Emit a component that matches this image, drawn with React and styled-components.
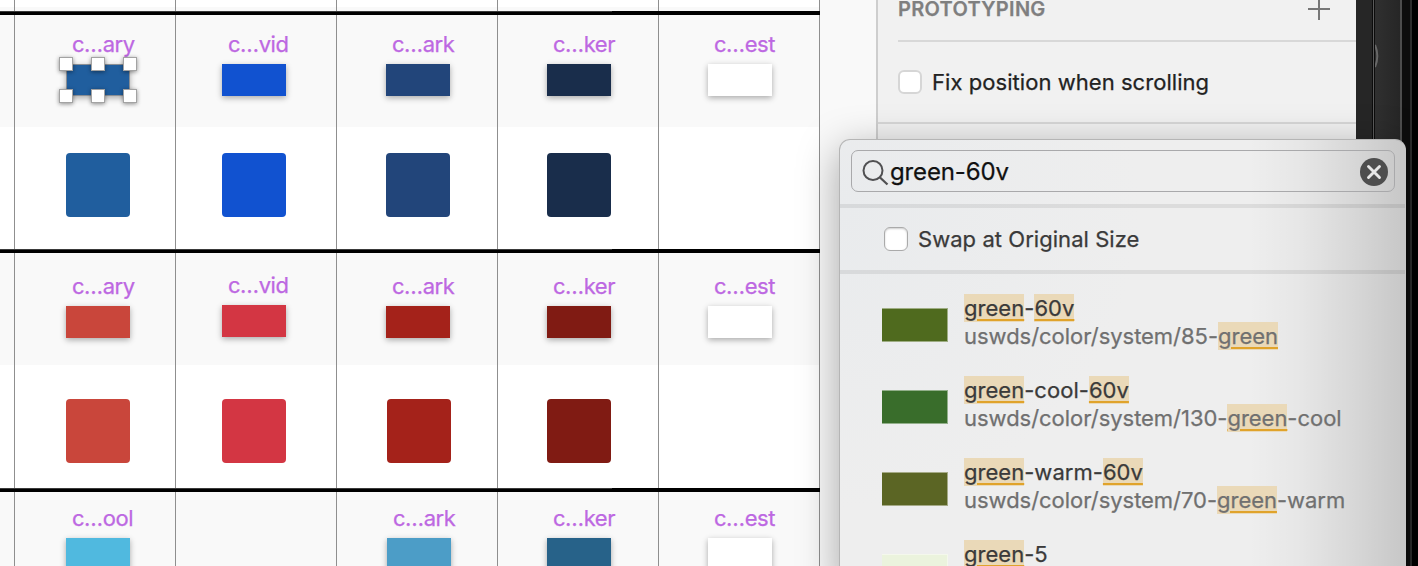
import React from "react";
import styled, { createGlobalStyle } from "styled-components";

const GlobalStyle = createGlobalStyle`
  * { box-sizing: border-box; }
  body { margin: 0; overflow: hidden; }
`;

const Screen = styled.div`
  position: relative;
  display: flex;
  width: 1418px;
  height: 566px;
  overflow: hidden;
  background: #f9f9f9;
  font-family: Inter, "Liberation Sans", sans-serif;
  font-size: 22px;
  font-weight: 400;
  -webkit-text-stroke: 0.25px;
  line-height: 28px;
  white-space: nowrap;
`;

const Board = styled.div`
  flex: none;
  width: 820px;
  background: #fff;
`;

const BoardTop = styled.div`
  display: flex;
  height: 11px;
  background: linear-gradient(#fff 7px, #f9f9f9 7px);
`;

const Rule = styled.div`
  height: 4px;
  background: #000;
  &::before {
    content: "";
    display: block;
    width: 612px;
    height: 5px;
    background: linear-gradient(#3a3a3a 1px, #000 1px 4px, #b8b8b8 4px);
  }
`;

const BoardRow = styled.div`
  display: flex;
  height: ${(p) => p.$height}px;
  background: linear-gradient(#f9f9f9 112px, #fff 112px);
`;

const Gutter = styled.div`
  flex: none;
  width: 15px;
  border-right: 1px solid #8f8f8f;
`;

const Cell = styled.div`
  flex: none;
  display: flex;
  flex-direction: column;
  width: 161px;
  padding-left: ${(p) => p.$inset || 0}px;
  padding-top: ${(p) => p.$top || 0}px;
  border-right: 1px solid #8f8f8f;
`;

const StyleName = styled.div`
  padding-left: 6px;
  height: 28px;
  margin-bottom: ${(p) => p.$gap}px;
  color: #bd68e2;
  letter-spacing: -0.45px;
`;

const Swatch = styled.div`
  flex: none;
  width: 64px;
  height: 32px;
  background: ${(p) => p.$color};
  box-shadow: 0 2px 6px rgba(0, 0, 0, 0.32);
  ${(p) => p.$selected && "border: 1px solid #8b8f94;"}
`;

const Handles = styled.div`
  display: grid;
  grid-template: repeat(2, 14px) / repeat(3, 14px);
  gap: 18px;
  margin: -8px;
`;

const Handle = styled.div`
  background: #fff;
  border: 1px solid #a3a3a3;
  box-shadow: 0 1px 4px rgba(0, 0, 0, 0.45);
`;

const Tile = styled.div`
  flex: none;
  width: 64px;
  height: 64px;
  margin-top: ${(p) => p.$gap}px;
  margin-left: ${(p) => p.$shift || 0}px;
  border-radius: 4px;
  background: ${(p) => p.$color};
`;

const CanvasGap = styled.div`
  flex: none;
  width: 56px;
`;

const Inspector = styled.div`
  flex: none;
  width: 480px;
  border-left: 2px solid #cecece;
  background: #f1f1f1;
`;

const SectionHead = styled.div`
  display: flex;
  align-items: flex-start;
  justify-content: space-between;
  height: 42px;
  margin-left: 20px;
  padding-right: 26px;
  border-bottom: 2px solid #d8d8d8;
`;

const SectionTitle = styled.div`
  margin-top: -5px;
  color: #7f7f7f;
  font-size: 20px;
  font-weight: 600;
  letter-spacing: 0.3px;
`;

const CheckRow = styled.label`
  display: flex;
  align-items: center;
  gap: 10px;
  height: ${(p) => p.$height}px;
  padding-left: ${(p) => p.$inset}px;
  border-bottom: ${(p) => p.$rule};
  color: ${(p) => p.$color};
  letter-spacing: 0.05px;
`;

const CheckBox = styled.span`
  flex: none;
  width: 24px;
  height: 24px;
  border-radius: 6px;
  background: #fff;
  border: ${(p) => (p.$soft ? "2px solid #d6d6d6" : "1px solid #aaa")};
  ${(p) => !p.$soft && "box-shadow: inset 0 1px 2px rgba(0,0,0,.2);"}
`;

const Behind = styled.div`
  flex: none;
  display: flex;
  width: 62px;
  background: #000;
`;

const Strip = styled.div`
  flex: none;
  width: ${(p) => p.$width}px;
  padding-top: ${(p) => p.$top || 0}px;
  overflow: hidden;
  background: ${(p) => p.$color};
`;

const Popover = styled.div`
  position: absolute;
  left: 839px;
  top: 139px;
  width: 567px;
  height: 450px;
  padding-top: 10px;
  border: 1px solid #b5b5b5;
  border-right-color: transparent;
  border-radius: 11px;
  background:
    linear-gradient(90deg, rgba(0, 0, 0, 0) 410px, rgba(0, 0, 0, 0.03) 460px, rgba(0, 0, 0, 0.09) 510px, rgba(0, 0, 0, 0.165) 566px) border-box,
    radial-gradient(circle at 0 70px, #e9ebed, #eeeeee 300px) border-box;
  box-shadow: 0 10px 40px rgba(0, 0, 0, 0.34);
`;

const SearchField = styled.div`
  display: flex;
  align-items: center;
  height: 42px;
  margin: 0 10px 0 11px;
  padding: 1px 6px 0 10px;
  border: 1px solid #a9a9ab;
  border-radius: 7px;
`;

const Query = styled.span`
  flex: 1;
  padding-top: 1px;
  color: #111;
  font-size: 24px;
  letter-spacing: -0.15px;
`;

const Divider = styled.div`
  height: 4px;
  margin-top: ${(p) => p.$gap || 0}px;
  background: rgba(0, 0, 0, 0.075);
`;

const Results = styled.div`
  display: flex;
  flex-direction: column;
  gap: 26px;
  padding: 20px 0 0 42px;
`;

const Result = styled.div`
  display: flex;
  align-items: center;
  gap: 16px;
  height: 56px;
`;

const ResultColor = styled.div`
  flex: none;
  width: 66px;
  height: 34px;
  margin-top: 6px;
  border: solid rgba(255, 255, 255, 0.45);
  border-width: 1px 1px 1px 0;
  background: ${(p) => p.$color};
`;

const ResultName = styled.div`
  color: #3a3a3a;
  letter-spacing: 0.03px;
`;

const ResultPath = styled.div`
  color: #707070;
  letter-spacing: -0.03px;
`;

const Match = styled.mark`
  display: inline-block;
  height: 28px;
  background: #ead9b8;
  color: inherit;
  text-decoration: underline 2px #e0a32b;
  text-underline-offset: 3px;
`;

const rows = [
  {
    height: 234,
    top: 15,
    tileGap: 57,
    cells: [
      { name: "c…ary", inset: 51, color: "#205e9e", tile: "#205e9e", selected: true },
      { name: "c…vid", inset: 46, color: "#1152d0", tile: "#1152d0" },
      { name: "c…ark", inset: 49, color: "#22457a", tile: "#22457a" },
      { name: "c…ker", inset: 49, color: "#192d4b", tile: "#192d4b" },
      { name: "c…est", inset: 49, color: "#fff" },
    ],
  },
  {
    height: 235,
    top: 19,
    tileGap: 61,
    cells: [
      { name: "c…ary", inset: 51, color: "#c9463b", tile: "#c9463b" },
      { name: "c…vid", inset: 46, color: "#d33643", tile: "#d33643", lift: 1 },
      { name: "c…ark", inset: 49, color: "#a4221a", tile: "#a4221a", shift: 1 },
      { name: "c…ker", inset: 49, color: "#801b13", tile: "#801b13" },
      { name: "c…est", inset: 49, color: "#fff" },
    ],
  },
  {
    height: 74,
    top: 12,
    cells: [
      { name: "c…ool", inset: 51, color: "#50b9df" },
      null,
      { name: "c…ark", inset: 50, color: "#4c9dc7" },
      { name: "c…ker", inset: 49, color: "#276289" },
      { name: "c…est", inset: 49, color: "#fff" },
    ],
  },
];

const results = [
  { color: "#4f6a1e", name: "green-60v", path: "uswds/color/system/85-green" },
  { color: "#396d2b", name: "green-cool-60v", path: "uswds/color/system/130-green-cool" },
  { color: "#5b6524", name: "green-warm-60v", path: "uswds/color/system/70-green-warm" },
  { color: "#ebf3dd", name: "green-5" },
];

const highlight = (text) =>
  text.split(/(green|60v)/).map((part, i) => (i % 2 ? <Match key={i}>{part}</Match> : part));

function StyleCell({ cell, row }) {
  if (!cell) return <Cell />;
  const lift = cell.lift || 0;
  return (
    <Cell $inset={cell.inset} $top={row.top - lift}>
      <StyleName $gap={6}>{cell.name}</StyleName>
      <Swatch $color={cell.color} $selected={cell.selected}>
        {cell.selected && (
          <Handles>
            {[0, 1, 2, 3, 4, 5].map((n) => (
              <Handle key={n} />
            ))}
          </Handles>
        )}
      </Swatch>
      {cell.tile && <Tile $color={cell.tile} $gap={row.tileGap + lift} $shift={cell.shift} />}
    </Cell>
  );
}

export default function App() {
  return (
    <>
      <GlobalStyle />
      <Screen>
        <Board>
          <BoardTop>
            <Gutter />
            {[0, 1, 2, 3, 4].map((n) => (
              <Cell key={n} />
            ))}
          </BoardTop>
          {rows.map((row, r) => (
            <React.Fragment key={r}>
              <Rule />
              <BoardRow $height={row.height}>
                <Gutter />
                {row.cells.map((cell, c) => (
                  <StyleCell key={c} cell={cell} row={row} />
                ))}
              </BoardRow>
            </React.Fragment>
          ))}
        </Board>
        <CanvasGap />
        <Inspector>
          <SectionHead>
            <SectionTitle>PROTOTYPING</SectionTitle>
            <svg width="22" height="22" viewBox="0 0 22 22" style={{ marginTop: -2 }}>
              <path d="M11 0v22M0 11h22" stroke="#777" strokeWidth="2" />
            </svg>
          </SectionHead>
          <CheckRow $height={82} $inset={20} $rule="2px solid #d6d6d6" $color="#222">
            <CheckBox $soft />
            Fix position when scrolling
          </CheckRow>
        </Inspector>
        <Behind>
          <Strip $width={16} $color="#262626" />
          <Strip $width={1} $color="#0c0c0c" />
          <Strip $width={1} $color="#5a5a5a" />
          <Strip $width={1} $color="#0c0c0c" />
          <Strip $width={25} $color="linear-gradient(90deg,#303030,#262626)" $top={43}>
            <svg width="4" height="26" viewBox="0 0 4 26" style={{ display: "block" }}>
              <path d="M0 2Q4.600 13 0 24" fill="none" stroke="#686868" strokeWidth="2" />
            </svg>
          </Strip>
          <Strip $width={2} $color="#4d4d4d" />
          <Strip $width={8} $color="#0d0d0d" />
          <Strip $width={2} $color="#2c2c2c" />
        </Behind>
        <Popover>
          <SearchField>
            <svg width="28" height="28" viewBox="0 0 28 28" fill="none" stroke="#505052" strokeWidth="2">
              <circle cx="11" cy="12.500" r="9.500" />
              <path d="M18 19.500l7.500 7" strokeWidth="2.300" />
            </svg>
            <Query>green-60v</Query>
            <svg width="28" height="28" viewBox="0 0 28 28">
              <circle cx="14" cy="14" r="14" fill="#4e4e4e" />
              <path
                d="M8.500 8.500l11 11M19.500 8.500L8.500 19.500"
                stroke="#e6e6e6"
                strokeWidth="2.900"
                strokeLinecap="round"
              />
            </svg>
          </SearchField>
          <Divider $gap={12} />
          <CheckRow $height={62} $inset={44} $rule="0" $color="#3a3a3a">
            <CheckBox />
            Swap at Original Size
          </CheckRow>
          <Divider />
          <Results>
            {results.map((r) => (
              <Result key={r.name}>
                <ResultColor $color={r.color} />
                <div>
                  <ResultName>{highlight(r.name)}</ResultName>
                  <ResultPath>{r.path ? highlight(r.path) : "\u00a0"}</ResultPath>
                </div>
              </Result>
            ))}
          </Results>
        </Popover>
      </Screen>
    </>
  );
}
